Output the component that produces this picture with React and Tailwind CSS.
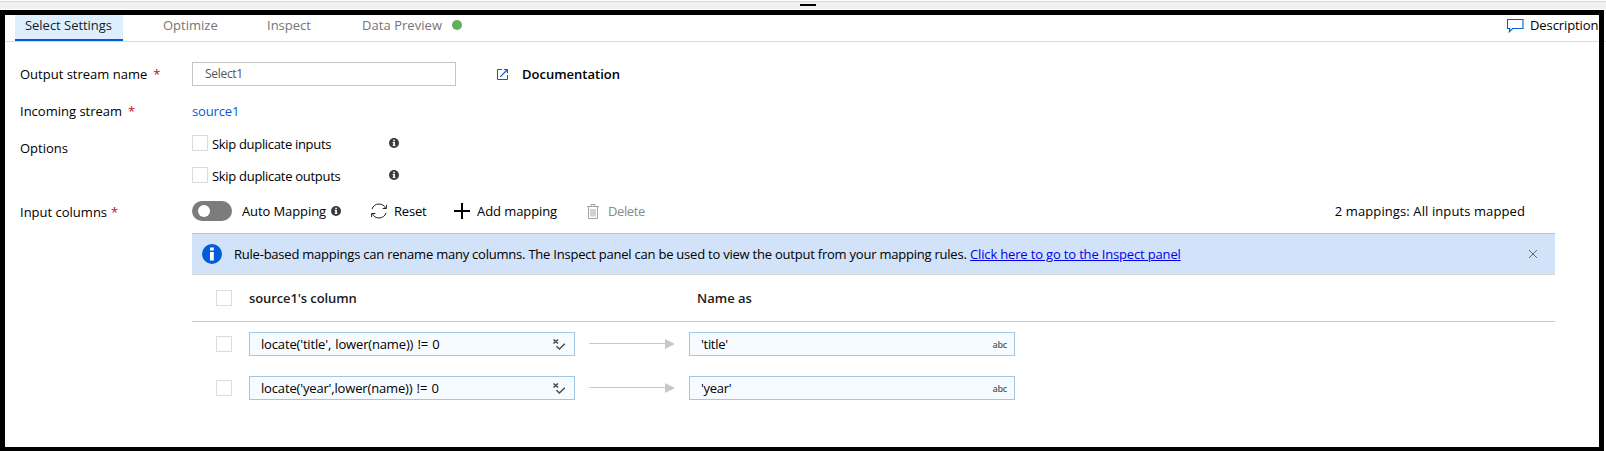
import React from 'react';

function Checkbox() {
  return <span className="block size-4 shrink-0 border border-[#dcdcdc] bg-white" />;
}

function Info({ className = '' }) {
  return (
    <svg className={`size-[10px] shrink-0 ${className}`} viewBox="0 0 10 10">
      <circle cx="5" cy="5" r="5" fill="#3b3b3b" />
      <path d="M4.2 1.8h1.7v1.4H4.2zM3.6 4h2.3v3.2h.6v.9H3.6v-.9h.6V4.9h-.6z" fill="#fff" />
    </svg>
  );
}

function Label({ children, required, className = '' }) {
  return (
    <div className={`w-[172px] shrink-0 ${className}`}>
      {children}
      {required && <span className="ml-[6px] text-[#b5121b]">*</span>}
    </div>
  );
}

function MappingRow({ source, name }) {
  return (
    <div className="flex h-6 items-center pl-6">
      <Checkbox />
      <div className="ml-[17px] flex h-6 w-[326px] items-center justify-between border border-[#a3c7e3] bg-[#f6fbff] pr-2 pl-[11px]">
        <span className="tracking-[-0.16px] [word-spacing:1px] whitespace-pre">{source}</span>
        <svg className="mt-px size-[14px]" viewBox="0 0 14 14" fill="none" stroke="#4c4c4c">
          <path d="M1.500 1.500l4.500 4M6 1.500l-4.500 4" strokeWidth="1.600" />
          <path d="M4.400 8.200l3 2.800 5.400-5.200" strokeWidth="1.500" />
        </svg>
      </div>
      <svg className="ml-[14px] h-[10px] w-[86px]" viewBox="0 0 86 10">
        <path d="M0 4h77v1H0z" fill="#c8c8c8" />
        <path d="M76 0l10 5-10 5z" fill="#c8c8c8" />
      </svg>
      <div className="ml-[14px] flex h-6 w-[326px] items-center justify-between border border-[#a3c7e3] bg-[#f6fbff] pr-[7px] pl-[11px]">
        <span className="tracking-[-0.3px]">{name}</span>
        <span className="text-[9px] leading-none font-semibold tracking-[-0.3px] text-[#5a5a5a]">abc</span>
      </div>
    </div>
  );
}

export default function App() {
  return (
    <div className="relative h-[451px] w-[1606px] overflow-hidden bg-white font-['Open_Sans','Noto_Sans',sans-serif] text-[13px] leading-[18px] text-black">
      <div className="h-[10px] border-b border-white pt-px">
        <div className="flex h-2 justify-center border-t border-[#d9d9d9] bg-[#f1f1f1] pt-[2px] pl-[10px]">
          <div className="h-[2px] w-4 bg-black" />
        </div>
      </div>

      <div className="flex h-8 items-start border-b border-[#dcdcdc] pl-[15px] text-[#757575]">
        <div className="h-[31px] w-[108px] border-b-2 border-[#015cda] bg-[#ddefff] pt-[6px] pl-[10px] tracking-[-0.03px] whitespace-nowrap text-[#1b1b1b]">Select Settings</div>
        <div className="ml-10 w-[104px] pt-[6px]">Optimize</div>
        <div className="w-[95px] pt-[6px]">Inspect</div>
        <div className="flex items-center pt-[6px]">
          <span className="w-[80px] tracking-[0.05px] whitespace-nowrap">Data Preview</span>
          <span className="ml-[10px] size-[10px] rounded-full bg-[#5fb05f]" />
        </div>
        <div className="ml-auto flex items-start pt-[6px] text-black">
          <svg className="mt-[2px] mr-[6px] h-[16px] w-[17px]" viewBox="0 0 17 16" fill="none" stroke="#015cda" strokeWidth="1.100">
            <path d="M.5 1.500h15.500v9H5.700l-3.400 3.200.5-3.200H.5z" />
          </svg>
          <span className="w-[76px] tracking-[-0.1px]">Description</span>
        </div>
      </div>

      <div className="pl-5">
        <div className="mt-5 flex h-6 items-center">
          <Label required>Output stream name</Label>
          <div className="flex h-6 w-[264px] items-center border border-[#c5c5c5] pl-3 text-[12px] tracking-[-0.3px] text-[#555]">Select1</div>
          <svg className="ml-[41px] size-[11px]" viewBox="0 0 11 11" fill="none" stroke="#1258bd">
            <path d="M5 .5H.5v10h10V6" />
            <path d="M3.200 7.800L10 1M6.800.5h3.700v3.700" strokeWidth="1.200" />
          </svg>
          <span className="ml-[14px] font-semibold">Documentation</span>
        </div>

        <div className="mt-4 flex">
          <Label required>Incoming stream</Label>
          <span className="tracking-[-0.15px] text-[#015cda]">source1</span>
        </div>

        <div className="mt-[15px] flex h-[66px]">
          <Label className="pt-1">Options</Label>
          <div className="flex flex-col gap-[14px]">
            <div className="flex h-[18px] items-start">
              <Checkbox />
              <span className="ml-1 w-[177px] tracking-[-0.32px]">Skip duplicate inputs</span>
              <Info className="mt-[3px]" />
            </div>
            <div className="flex h-[18px] items-start">
              <Checkbox />
              <span className="ml-1 w-[177px] tracking-[-0.3px]">Skip duplicate outputs</span>
              <Info className="mt-[3px]" />
            </div>
          </div>
        </div>

        <div className="flex h-5 items-center">
          <Label required className="pt-[2px]"><span className="-mr-[2px]">Input columns</span></Label>
          <span className="flex h-5 w-10 items-center rounded-full bg-[#7c7c7c] pl-[6px]">
            <span className="size-3 rounded-full bg-white" />
          </span>
          <span className="ml-[10px] w-[89px] tracking-[-0.1px]">Auto Mapping</span>
          <Info />
          <svg className="ml-[30px] size-4" viewBox="0 0 16 16" fill="none" stroke="#222" strokeWidth="1">
            <path d="M1 6.200C1.800 3 4.600 1 8 1c3 0 5.500 1.600 6.600 4.500M15 9.800C14.200 13 11.400 15 8 15c-3 0-5.500-1.600-6.600-4.500" />
            <path d="M15.400 1.800v3.700h-3.700M.6 14.200v-3.700h3.700" />
          </svg>
          <span className="ml-[7px] w-[60px] tracking-[-0.2px]">Reset</span>
          <svg className="size-4" viewBox="0 0 16 16" fill="#000">
            <path d="M7 0h2v7h7v2H9v7H7V9H0V7h7z" />
          </svg>
          <span className="ml-[7px] w-[110px] tracking-[-0.08px]">Add mapping</span>
          <svg className="h-[15px] w-3" viewBox="0 0 12 15" fill="none" stroke="#a3a3a3">
            <path d="M0 2.500h12M4 2V.5h4V2M1.500 3v11.500h9V3M4 5v7.500M6 5v7.500M8 5v7.500" />
          </svg>
          <span className="ml-[9px] tracking-[-0.4px] text-[#8a8a8a]">Delete</span>
          <span className="mr-[81px] ml-auto tracking-[0.1px]">2 mappings: All inputs mapped</span>
        </div>

        <div className="mt-3 ml-[172px] w-[1363px]">
          <div className="flex h-[42px] items-center border-t border-b border-t-[#c4c4c4] border-b-[#dadada] bg-[#d2e2f9] pl-[10px]">
            <svg className="size-5" viewBox="0 0 20 20">
              <circle cx="10" cy="10" r="10" fill="#015cda" />
              <path d="M8 3.500h3.800v3H8zM8 8h3.800v8.500H8z" fill="#fff" />
            </svg>
            <span className="ml-3 tracking-[-0.226px] whitespace-nowrap">
              Rule-based mappings can rename many columns. The Inspect panel can be used to view the output from your mapping rules.
            </span>
            <a className="ml-[3.500px] tracking-[-0.165px] whitespace-nowrap text-[#0000ee] underline">Click here to go to the Inspect panel</a>
            <svg className="mr-[18px] ml-auto size-[8px]" viewBox="0 0 8 8" stroke="#666" strokeWidth="1">
              <path d="M0 0l8 8M8 0L0 8" />
            </svg>
          </div>
          <div className="flex h-[47px] items-center border-b border-[#c8c8c8] pl-6 font-semibold text-[#1b1b1b]">
            <Checkbox />
            <span className="ml-[17px] w-[448px] tracking-[-0.1px]">source1's column</span>
            <span>Name as</span>
          </div>
          <div className="mt-[10px] flex flex-col gap-5">
            <MappingRow source="locate('title', lower(name)) != 0" name="'title'" />
            <MappingRow source="locate('year',lower(name)) != 0" name="'year'" />
          </div>
        </div>
      </div>

      <div className="pointer-events-none absolute top-[10px] left-0 h-[441px] w-[1604px] border-[5px] border-b-4 border-black" />
    </div>
  );
}
